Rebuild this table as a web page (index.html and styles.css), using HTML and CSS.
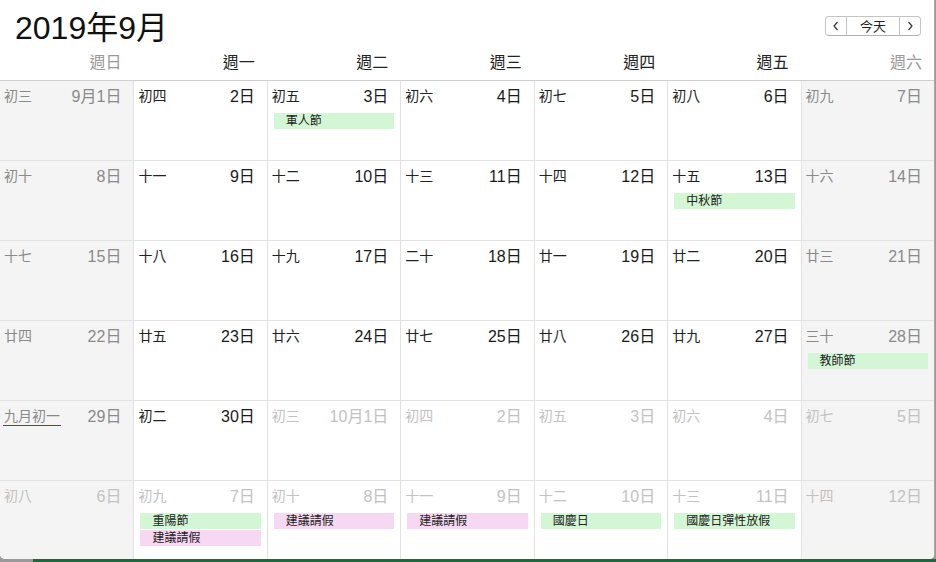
FILE: index.html
```html
<!DOCTYPE html>
<html lang="zh-Hant">
<head>
    <meta charset="UTF-8">
    <title>2019年9月</title>
    <link rel="stylesheet" href="styles.css">
</head>
<body>
    <div class="window">
        <!-- Заголовок месяца -->
        <div class="top">
            <h1>2019年9月</h1>
            <div class="nav">
                <button class="nav-btn"><svg width="8" height="10" viewBox="0 0 8 10"><path d="M5.5 1 L2 5 L5.5 9" fill="none" stroke="#333" stroke-width="1.2"/></svg></button>
                <button class="nav-btn today">今天</button>
                <button class="nav-btn"><svg width="8" height="10" viewBox="0 0 8 10"><path d="M2.5 1 L6 5 L2.5 9" fill="none" stroke="#333" stroke-width="1.2"/></svg></button>
            </div>
        </div>
        <div class="weekdays">
            <div class="wd weekend-text">週日</div>
            <div class="wd">週一</div>
            <div class="wd">週二</div>
            <div class="wd">週三</div>
            <div class="wd">週四</div>
            <div class="wd">週五</div>
            <div class="wd weekend-text">週六</div>
        </div>

        <!-- Сетка дней -->
        <div class="grid">
            <!-- week 1 -->
            <div class="cell weekend"><div class="head"><span class="lunar">初三</span><span class="date">9月1日</span></div></div>
            <div class="cell"><div class="head"><span class="lunar">初四</span><span class="date">2日</span></div></div>
            <div class="cell"><div class="head"><span class="lunar">初五</span><span class="date">3日</span></div><div class="ev green">軍人節</div></div>
            <div class="cell"><div class="head"><span class="lunar">初六</span><span class="date">4日</span></div></div>
            <div class="cell"><div class="head"><span class="lunar">初七</span><span class="date">5日</span></div></div>
            <div class="cell"><div class="head"><span class="lunar">初八</span><span class="date">6日</span></div></div>
            <div class="cell weekend"><div class="head"><span class="lunar">初九</span><span class="date">7日</span></div></div>
            <!-- week 2 -->
            <div class="cell weekend"><div class="head"><span class="lunar">初十</span><span class="date">8日</span></div></div>
            <div class="cell"><div class="head"><span class="lunar">十一</span><span class="date">9日</span></div></div>
            <div class="cell"><div class="head"><span class="lunar">十二</span><span class="date">10日</span></div></div>
            <div class="cell"><div class="head"><span class="lunar">十三</span><span class="date">11日</span></div></div>
            <div class="cell"><div class="head"><span class="lunar">十四</span><span class="date">12日</span></div></div>
            <div class="cell"><div class="head"><span class="lunar">十五</span><span class="date">13日</span></div><div class="ev green">中秋節</div></div>
            <div class="cell weekend"><div class="head"><span class="lunar">十六</span><span class="date">14日</span></div></div>
            <!-- week 3 -->
            <div class="cell weekend"><div class="head"><span class="lunar">十七</span><span class="date">15日</span></div></div>
            <div class="cell"><div class="head"><span class="lunar">十八</span><span class="date">16日</span></div></div>
            <div class="cell"><div class="head"><span class="lunar">十九</span><span class="date">17日</span></div></div>
            <div class="cell"><div class="head"><span class="lunar">二十</span><span class="date">18日</span></div></div>
            <div class="cell"><div class="head"><span class="lunar">廿一</span><span class="date">19日</span></div></div>
            <div class="cell"><div class="head"><span class="lunar">廿二</span><span class="date">20日</span></div></div>
            <div class="cell weekend"><div class="head"><span class="lunar">廿三</span><span class="date">21日</span></div></div>
            <!-- week 4 -->
            <div class="cell weekend"><div class="head"><span class="lunar">廿四</span><span class="date">22日</span></div></div>
            <div class="cell"><div class="head"><span class="lunar">廿五</span><span class="date">23日</span></div></div>
            <div class="cell"><div class="head"><span class="lunar">廿六</span><span class="date">24日</span></div></div>
            <div class="cell"><div class="head"><span class="lunar">廿七</span><span class="date">25日</span></div></div>
            <div class="cell"><div class="head"><span class="lunar">廿八</span><span class="date">26日</span></div></div>
            <div class="cell"><div class="head"><span class="lunar">廿九</span><span class="date">27日</span></div></div>
            <div class="cell weekend"><div class="head"><span class="lunar">三十</span><span class="date">28日</span></div><div class="ev green">教師節</div></div>
            <!-- week 5 -->
            <div class="cell weekend"><div class="head"><span class="lunar month-start">九月初一</span><span class="date">29日</span></div></div>
            <div class="cell"><div class="head"><span class="lunar">初二</span><span class="date">30日</span></div></div>
            <div class="cell other"><div class="head"><span class="lunar">初三</span><span class="date">10月1日</span></div></div>
            <div class="cell other"><div class="head"><span class="lunar">初四</span><span class="date">2日</span></div></div>
            <div class="cell other"><div class="head"><span class="lunar">初五</span><span class="date">3日</span></div></div>
            <div class="cell other"><div class="head"><span class="lunar">初六</span><span class="date">4日</span></div></div>
            <div class="cell weekend other"><div class="head"><span class="lunar">初七</span><span class="date">5日</span></div></div>
            <!-- week 6 -->
            <div class="cell weekend other"><div class="head"><span class="lunar">初八</span><span class="date">6日</span></div></div>
            <div class="cell other"><div class="head"><span class="lunar">初九</span><span class="date">7日</span></div><div class="ev green">重陽節</div><div class="ev pink">建議請假</div></div>
            <div class="cell other"><div class="head"><span class="lunar">初十</span><span class="date">8日</span></div><div class="ev pink">建議請假</div></div>
            <div class="cell other"><div class="head"><span class="lunar">十一</span><span class="date">9日</span></div><div class="ev pink">建議請假</div></div>
            <div class="cell other"><div class="head"><span class="lunar">十二</span><span class="date">10日</span></div><div class="ev green">國慶日</div></div>
            <div class="cell other"><div class="head"><span class="lunar">十三</span><span class="date">11日</span></div><div class="ev green">國慶日彈性放假</div></div>
            <div class="cell weekend other"><div class="head"><span class="lunar">十四</span><span class="date">12日</span></div></div>
        </div>
    </div>
    <div class="desk"></div>
</body>
</html>
```

FILE: styles.css
```css
body {
    margin: 0;
    padding: 0;
    background-color: #9a9a9a;
    font-family: "Liberation Sans", "Noto Sans CJK TC", sans-serif;
    color: #222;
    overflow: hidden;
}

.window {
    width: 934px;
    height: 559px;
    background: #fff;
    border-right: 1px solid #a8a8a8;
    border-radius: 0 0 5px 5px;
    overflow: hidden;
}

.top {
    display: flex;
    justify-content: space-between;
    align-items: flex-start;
    height: 48px;
}

h1 {
    margin: 8px 0 0 15px;
    font-size: 32px;
    font-weight: 400;
    line-height: 40px;
    color: #111;
}

.nav {
    display: flex;
    margin: 16px 13px 0 0;
}

.nav-btn {
    display: flex;
    align-items: center;
    justify-content: center;
    height: 20px;
    padding: 0;
    border: 1px solid #c4c4c4;
    border-bottom-color: #b0b0b0;
    background: #fff;
    font-family: inherit;
    font-size: 13px;
    line-height: 17px;
    color: #222;
    width: 22px;
    margin-left: -1px;
}

.nav-btn.today {
    width: 54px;
    border-radius: 0;
}

.nav-btn:first-child {
    border-radius: 4px 0 0 4px;
}

.nav-btn:last-child {
    border-radius: 0 4px 4px 0;
}

.weekdays {
    display: grid;
    grid-template-columns: repeat(7, 1fr);
    height: 33px;
    border-bottom: 1px solid #cfcfcf;
    box-sizing: border-box;
}

.wd {
    text-align: right;
    padding-right: 12px;
    font-size: 16px;
    line-height: 30px;
    color: #222;
}

.wd.weekend-text {
    color: #999;
}

.grid {
    display: grid;
    grid-template-columns: repeat(7, 1fr);
    grid-auto-rows: 80px;
}

.cell {
    border-left: 1px solid #e2e2e2;
    border-bottom: 1px solid #e2e2e2;
    padding: 6px 0 0 0;
    box-sizing: border-box;
}

.cell:nth-child(7n+1) {
    border-left: none;
}

.cell.weekend {
    background: #f4f4f4;
}

.head {
    display: flex;
    justify-content: space-between;
    align-items: flex-start;
    padding: 0 12px 0 4px;
    height: 19px;
    margin-bottom: 7px;
}

.lunar {
    display: inline-block;
    font-size: 14px;
    line-height: 18px;
    color: #222;
}

.date {
    font-size: 16px;
    line-height: 19px;
    color: #1a1a1a;
}

.weekend .lunar,
.weekend .date {
    color: #8a8a8a;
}

.other .lunar,
.other .date {
    color: #c2c2c2;
}

.weekend .lunar.month-start {
    height: 18px;
    padding: 0 1px;
    margin-left: -1px;
    box-shadow: 0 1px 0 #ff0000;
}

.ev {
    margin: 0 6px 1px 6px;
    height: 16px;
    padding-left: 12px;
    font-size: 12px;
    line-height: 16px;
    color: #222;
}

.ev.green {
    background: #d3f6d5;
}

.ev.pink {
    background: #f7d8f3;
}

.desk {
    height: 3px;
    margin-left: 33px;
    background: #1c6a3c;
}
```
